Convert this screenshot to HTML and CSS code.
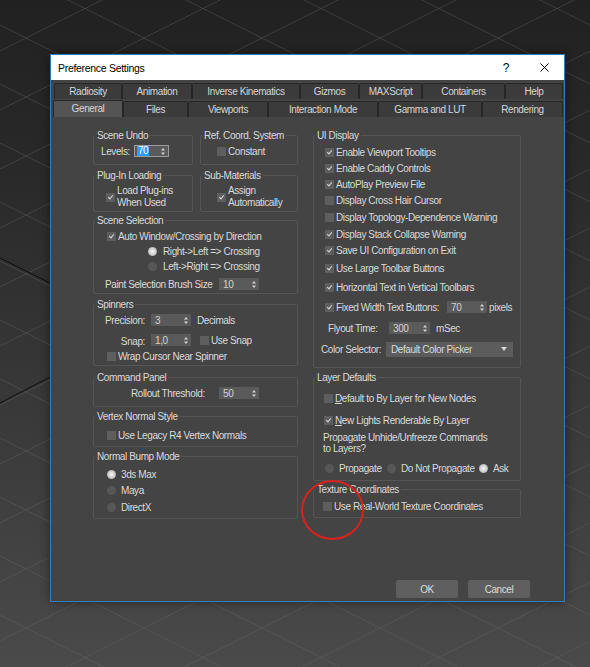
FILE: index.html
```html
<!DOCTYPE html>
<html lang="en">
<head>
  <meta charset="UTF-8" />
  <title>Preference Settings</title>
  <link rel="stylesheet" href="styles.css">
</head>
<body>
  <!-- viewport grid behind the dialog -->
  <svg class="viewport-grid" width="590" height="667" viewBox="0 0 590 667">
    <path class="grid-lines" d="M0 615L590 910M0 556L590 851M0 497L590 792M0 438L590 733M0 379L590 674M0 320L590 615M0 261L590 556M0 202L590 497M0 143L590 438M0 84L590 379M0 25L590 320M0 -34L590 261M0 -93L590 202M0 -152L590 143M0 -211L590 84M0 -270L590 25M0 51L590 -244M0 110L590 -185M0 169L590 -126M0 228L590 -67M0 287L590 -8M0 346L590 51M0 405L590 110M0 464L590 169M0 523L590 228M0 582L590 287M0 641L590 346M0 700L590 405M0 759L590 464M0 818L590 523M0 877L590 582M0 936L590 641"/>
    <path class="axis-lines" d="M-10 253L60 288M0 403L60 372"/>
  </svg>

  <div class="dialog">
    <div class="titlebar">
      <span class="title">Preference Settings</span>
      <span class="tb-btn">?</span>
      <span class="tb-btn close">
        <svg width="9" height="9" viewBox="0 0 9 9"><path d="M0.5 0.5L8.5 8.5M8.5 0.5L0.5 8.5" stroke="#000" stroke-width="1"/></svg>
      </span>
    </div>

    <div class="tabs">
      <div class="tab-row first">
        <div class="tab">Radiosity</div>
        <div class="tab">Animation</div>
        <div class="tab">Inverse Kinematics</div>
        <div class="tab">Gizmos</div>
        <div class="tab">MAXScript</div>
        <div class="tab">Containers</div>
        <div class="tab">Help</div>
      </div>
      <div class="tab-row second">
        <div class="tab active">General</div>
        <div class="tab">Files</div>
        <div class="tab">Viewports</div>
        <div class="tab">Interaction Mode</div>
        <div class="tab">Gamma and LUT</div>
        <div class="tab">Rendering</div>
      </div>
    </div>

    <div class="page">
      <!-- left column -->
      <div class="col">
        <div class="pair">
          <div class="group g-undo">
            <div class="group-title">Scene Undo</div>
            <div class="group-body">
              <div class="row">
                <span>Levels:</span>
                <span class="spin focus"><span class="sel">70</span><svg class="arrows" width="4" height="7" viewBox="0 0 4 7"><path d="M2 0L4 2.5H0zM2 7L0 4.5h4z"/></svg></span>
              </div>
            </div>
          </div>
          <div class="group g-ref">
            <div class="group-title">Ref. Coord. System</div>
            <div class="group-body">
              <div class="row"><span class="cb"></span>Constant</div>
            </div>
          </div>
        </div>

        <div class="pair mt10">
          <div class="group g-plug">
            <div class="group-title">Plug-In Loading</div>
            <div class="group-body">
              <div class="row two-line"><span class="cb on"></span><span>Load Plug-ins<br>When Used</span></div>
            </div>
          </div>
          <div class="group g-sub">
            <div class="group-title">Sub-Materials</div>
            <div class="group-body">
              <div class="row two-line"><span class="cb on"></span><span>Assign<br>Automatically</span></div>
            </div>
          </div>
        </div>

        <div class="group g-select">
          <div class="group-title">Scene Selection</div>
          <div class="group-body">
            <div class="row short in-13"><span class="cb on"></span>Auto Window/Crossing by Direction</div>
            <div class="row short in-54"><span class="rb on"></span>Right-&gt;Left =&gt; Crossing</div>
            <div class="row short in-54"><span class="rb"></span>Left-&gt;Right =&gt; Crossing</div>
            <div class="row in-11 mt2">
              <span class="lbl-paint">Paint Selection Brush Size</span>
              <span class="spin"><span>10</span><svg class="arrows" width="4" height="7" viewBox="0 0 4 7"><path d="M2 0L4 2.5H0zM2 7L0 4.5h4z"/></svg></span>
            </div>
          </div>
        </div>

        <div class="group g-spin">
          <div class="group-title">Spinners</div>
          <div class="group-body">
            <div class="row in-10">
              <span class="spin-label">Precision:</span>
              <span class="spin"><span>3</span><svg class="arrows" width="4" height="7" viewBox="0 0 4 7"><path d="M2 0L4 2.5H0zM2 7L0 4.5h4z"/></svg></span>
              <span class="after-spin">Decimals</span>
            </div>
            <div class="row in-10 mt4">
              <span class="spin-label snap">Snap:</span>
              <span class="spin"><span>1,0</span><svg class="arrows" width="4" height="7" viewBox="0 0 4 7"><path d="M2 0L4 2.5H0zM2 7L0 4.5h4z"/></svg></span>
              <span class="cb snap-cb"></span>Use Snap
            </div>
            <div class="row in-13 mt1 last"><span class="cb"></span>Wrap Cursor Near Spinner</div>
          </div>
        </div>

        <div class="group g-cmd">
          <div class="group-title">Command Panel</div>
          <div class="group-body">
            <div class="row in-37">
              <span class="lbl-rollout">Rollout Threshold:</span>
              <span class="spin"><span>50</span><svg class="arrows" width="4" height="7" viewBox="0 0 4 7"><path d="M2 0L4 2.5H0zM2 7L0 4.5h4z"/></svg></span>
            </div>
          </div>
        </div>

        <div class="group g-vertex">
          <div class="group-title">Vertex Normal Style</div>
          <div class="group-body">
            <div class="row in-13"><span class="cb"></span>Use Legacy R4 Vertex Normals</div>
          </div>
        </div>

        <div class="group g-bump">
          <div class="group-title">Normal Bump Mode</div>
          <div class="group-body">
            <div class="row bump in-13"><span class="rb on"></span>3ds Max</div>
            <div class="row bump in-13"><span class="rb"></span>Maya</div>
            <div class="row bump in-13"><span class="rb"></span>DirectX</div>
          </div>
        </div>
      </div>

      <!-- right column -->
      <div class="col">
        <div class="group g-ui">
          <div class="group-title">UI Display</div>
          <div class="group-body">
            <div class="row in-11"><span class="cb on"></span>Enable Viewport Tooltips</div>
            <div class="row in-11"><span class="cb on"></span>Enable Caddy Controls</div>
            <div class="row in-11"><span class="cb on"></span>AutoPlay Preview File</div>
            <div class="row in-11"><span class="cb"></span>Display Cross Hair Cursor</div>
            <div class="row in-11 mt1"><span class="cb"></span>Display Topology-Dependence Warning</div>
            <div class="row in-11 mt1"><span class="cb on"></span>Display Stack Collapse Warning</div>
            <div class="row in-11"><span class="cb on"></span>Save UI Configuration on Exit</div>
            <div class="row in-11 mt2"><span class="cb on"></span>Use Large Toolbar Buttons</div>
            <div class="row in-11 mt3"><span class="cb on"></span>Horizontal Text in Vertical Toolbars</div>
            <div class="row in-11 mt4">
              <span class="cb on"></span><span class="lbl-fixed">Fixed Width Text Buttons:</span>
              <span class="spin"><span>70</span><svg class="arrows" width="4" height="7" viewBox="0 0 4 7"><path d="M2 0L4 2.5H0zM2 7L0 4.5h4z"/></svg></span>
              <span class="after-pixels">pixels</span>
            </div>
            <div class="row in-14 mt5">
              <span class="lbl-flyout">Flyout Time:</span>
              <span class="spin wide"><span>300</span><svg class="arrows" width="4" height="7" viewBox="0 0 4 7"><path d="M2 0L4 2.5H0zM2 7L0 4.5h4z"/></svg></span>
              <span class="after-spin">mSec</span>
            </div>
            <div class="row in-7 mt5">
              <span class="lbl-color">Color Selector:</span>
              <span class="select">Default Color Picker<svg width="6" height="4" viewBox="0 0 6 4"><path d="M0 0h6L3 4z" fill="#d8d8d8"/></svg></span>
            </div>
          </div>
        </div>

        <div class="group g-layer">
          <div class="group-title">Layer Defaults</div>
          <div class="group-body">
            <div class="row in-10"><span class="cb"></span><span><u>D</u>efault to By Layer for New Nodes</span></div>
            <div class="row in-10 mt6"><span class="cb on"></span><span><u>N</u>ew Lights Renderable By Layer</span></div>
            <div class="note">Propagate Unhide/Unfreeze Commands<br>to Layers?</div>
            <div class="row in-11 mt6">
              <span class="opt opt-1"><span class="rb"></span>Propagate</span>
              <span class="opt opt-2"><span class="rb"></span>Do Not Propagate</span>
              <span class="opt"><span class="rb on"></span>Ask</span>
            </div>
          </div>
        </div>

        <div class="group g-tex">
          <div class="group-title">Texture Coordinates</div>
          <div class="group-body">
            <div class="row in-9"><span class="cb"></span>Use Real-World Texture Coordinates</div>
          </div>
        </div>
      </div>
    </div>

    <div class="footer">
      <button class="btn">OK</button>
      <button class="btn">Cancel</button>
    </div>
  </div>

  <!-- red annotation ring -->
  <div class="red-ring"></div>
</body>
</html>
```

FILE: styles.css
```css
body {
  margin: 0;
  width: 590px;
  height: 667px;
  overflow: hidden;
  position: relative;
  background: linear-gradient(#212121 0%, #292929 25%, #4a4a4a 100%);
  font-family: "Liberation Sans", Arial, sans-serif;
  font-size: 10px;
  letter-spacing: -0.4px;
  color: #dadada;
}

.viewport-grid {
  position: absolute;
  left: 0;
  top: 0;
}

.grid-lines {
  stroke: #6a6a6a;
  stroke-opacity: 0.4;
  stroke-width: 1;
  fill: none;
}

.axis-lines {
  stroke: #0d0d0d;
  stroke-width: 1;
  fill: none;
}

.dialog {
  position: absolute;
  left: 50px;
  top: 54px;
  width: 515px;
  height: 548px;
  box-sizing: border-box;
  border: 1px solid #2e7dc5;
  background: #444444;
  display: flex;
  flex-direction: column;
  box-shadow: 0 0 10px rgba(0, 0, 0, 0.45);
}

/* title bar */
.titlebar {
  height: 25px;
  background: #fff;
  color: #000;
  display: flex;
  align-items: center;
  padding: 0 5px 0 7px;
  font-size: 10.5px;
  letter-spacing: -0.3px;
  flex: none;
}

.title {
  flex: 1;
}

.tb-btn {
  width: 30px;
  text-align: center;
  font-size: 12px;
  display: flex;
  justify-content: center;
}

.tb-btn + .tb-btn {
  margin-left: 8px;
}

/* tabs */
.tabs {
  padding-top: 3px;
  flex: none;
}

.tab-row {
  display: flex;
  height: 16px;
}

.tab-row.first {
  padding-left: 3px;
}

.tab-row.second {
  padding-left: 2px;
  margin-top: 1px;
  height: 17px;
  align-items: flex-end;
}

.tab {
  box-sizing: border-box;
  height: 16px;
  border: 1px solid #262626;
  border-bottom: none;
  border-radius: 2px 2px 0 0;
  background: #3b3b3b;
  color: #d6d6d6;
  text-align: center;
  line-height: 15px;
  white-space: nowrap;
}

.tab.active {
  height: 17px;
  background: #545454;
}

.first .tab:nth-child(1) { width: 68px; }
.first .tab:nth-child(2) { width: 70px; }
.first .tab:nth-child(3) { width: 108px; }
.first .tab:nth-child(4) { width: 59px; }
.first .tab:nth-child(5) { width: 63px; }
.first .tab:nth-child(6) { width: 83px; }
.first .tab:nth-child(7) { width: 58px; }

.second .tab:nth-child(1) { width: 70px; }
.second .tab:nth-child(2) { width: 65px; }
.second .tab:nth-child(3) { width: 80px; }
.second .tab:nth-child(4) { width: 110px; }
.second .tab:nth-child(5) { width: 104px; }
.second .tab:nth-child(6) { width: 81px; }

/* page */
.page {
  flex: 1;
  display: grid;
  grid-template-columns: 205px 208px;
  column-gap: 15px;
  align-content: start;
  padding: 18px 0 0 42px;
}

.col {
  display: flex;
  flex-direction: column;
}

.pair {
  display: flex;
  gap: 7px;
}

.pair .group:first-child { width: 100px; }
.pair .group:last-child { width: 98px; }

/* group boxes */
.group {
  box-sizing: border-box;
  border: 1px solid #555555;
  border-radius: 2px;
}

.group-title {
  display: table;
  margin: -6px 0 -6px 1px;
  padding: 0 2px;
  height: 12px;
  line-height: 12px;
  background: #444444;
  white-space: nowrap;
}

.g-undo { height: 30px; }
.g-undo .group-body { padding: 7px 0 0 7px; }
.g-ref { height: 30px; }
.g-ref .group-body { padding: 7px 0 0 16px; }
.g-plug { height: 37px; }
.g-plug .group-body { padding: 9px 0 0 12px; }
.g-sub { height: 37px; }
.g-sub .group-body { padding: 9px 0 0 16px; }
.g-select { height: 74px; margin-top: 8px; }
.g-select .group-body { padding-top: 8px; }
.g-spin { height: 62px; margin-top: 10px; }
.g-spin .group-body { padding-top: 7px; }
.g-cmd { height: 30px; margin-top: 11px; }
.g-cmd .group-body { padding-top: 7px; }
.g-vertex { height: 31px; margin-top: 9px; }
.g-vertex .group-body { padding-top: 10px; }
.g-bump { height: 63px; margin-top: 9px; }
.g-bump .group-body { padding-top: 9px; }

.g-ui { height: 233px; }
.g-ui .group-body { padding-top: 8px; }
.g-layer { height: 104px; margin-top: 9px; }
.g-layer .group-body { padding-top: 12px; }
.g-tex { height: 29px; margin-top: 8px; }
.g-tex .group-body { padding-top: 8px; }

/* rows */
.row {
  display: flex;
  align-items: center;
  height: 16px;
  white-space: nowrap;
}

.row.short { height: 15px; }
.row.last { height: 14px; }
.row.bump { height: 16.5px; }
.row.two-line {
  height: 24px;
  line-height: 12px;
}

.in-7 { padding-left: 7px; }
.in-9 { padding-left: 9px; }
.in-10 { padding-left: 10px; }
.in-11 { padding-left: 11px; }
.in-13 { padding-left: 13px; }
.in-14 { padding-left: 14px; }
.in-37 { padding-left: 37px; }
.in-54 { padding-left: 54px; }

.mt1 { margin-top: 1px; }
.mt2 { margin-top: 2px; }
.mt3 { margin-top: 3px; }
.mt4 { margin-top: 4px; }
.mt5 { margin-top: 5px; }
.mt6 { margin-top: 6px; }
.mt10 { margin-top: 10px; }

.note {
  padding-left: 9px;
  margin-top: 4px;
  line-height: 11px;
}

/* controls */
.cb {
  position: relative;
  flex: none;
  width: 9px;
  height: 9px;
  margin-right: 2px;
  background: #5e5e5e;
}

.cb.on::after {
  content: "";
  position: absolute;
  left: 3px;
  top: 1px;
  width: 2px;
  height: 4px;
  border: solid #d8d8d8;
  border-width: 0 1.5px 1.5px 0;
  transform: rotate(40deg);
}

.rb {
  flex: none;
  width: 9px;
  height: 9px;
  margin-right: 6px;
  border-radius: 50%;
  background: #575757;
}

.g-bump .rb { margin-right: 5px; }

.rb.on {
  background: radial-gradient(circle, #f2f2f2 0%, #d6d6d6 45%, #8a8a8a 100%);
}

.spin {
  flex: none;
  box-sizing: border-box;
  width: 40px;
  height: 12px;
  padding: 0 3px 0 4px;
  display: flex;
  align-items: center;
  justify-content: space-between;
  background: #5a5a5a;
  color: #d2d2d2;
}

.spin.wide { width: 41px; }

.spin.focus {
  width: 35px;
  margin-left: 4px;
  padding-left: 2px;
  border: 1px solid #9c9c9c;
}

.spin .sel {
  background: #3399ff;
  color: #fff;
  padding: 0 1px;
  line-height: 10px;
}

.arrows path {
  fill: #d2d2d2;
}

.lbl-paint { width: 114px; }
.lbl-rollout { width: 88px; }
.lbl-fixed { width: 111px; }
.lbl-flyout { width: 61px; }
.lbl-color { width: 65px; }

.spin-label {
  width: 41px;
  margin-right: 6px;
  text-align: right;
}

.spin-label.snap {
  padding-top: 3px;
}

.after-spin { margin-left: 6px; }
.after-pixels { margin-left: 2px; }
.snap-cb { margin-left: 9px; }

.select {
  box-sizing: border-box;
  width: 127px;
  height: 15px;
  padding: 0 6px 0 5px;
  display: flex;
  align-items: center;
  justify-content: space-between;
  background: #5c5c5c;
}

.opt {
  display: flex;
  align-items: center;
}

.opt .rb { margin-right: 5px; }
.opt-1 { width: 62px; }
.opt-2 { width: 92px; }

/* footer buttons */
.footer {
  flex: none;
  display: flex;
  justify-content: flex-end;
  gap: 10px;
  padding: 0 34px 3px 0;
}

.btn {
  width: 62px;
  height: 18px;
  border: none;
  border-radius: 2px;
  background: #5f5f5f;
  color: #dcdcdc;
  font: inherit;
  letter-spacing: inherit;
  padding: 0;
}

.red-ring {
  position: absolute;
  left: 301px;
  top: 480px;
  width: 63px;
  height: 60px;
  box-sizing: border-box;
  border: 2px solid #d8221f;
  border-radius: 50%;
}
```
